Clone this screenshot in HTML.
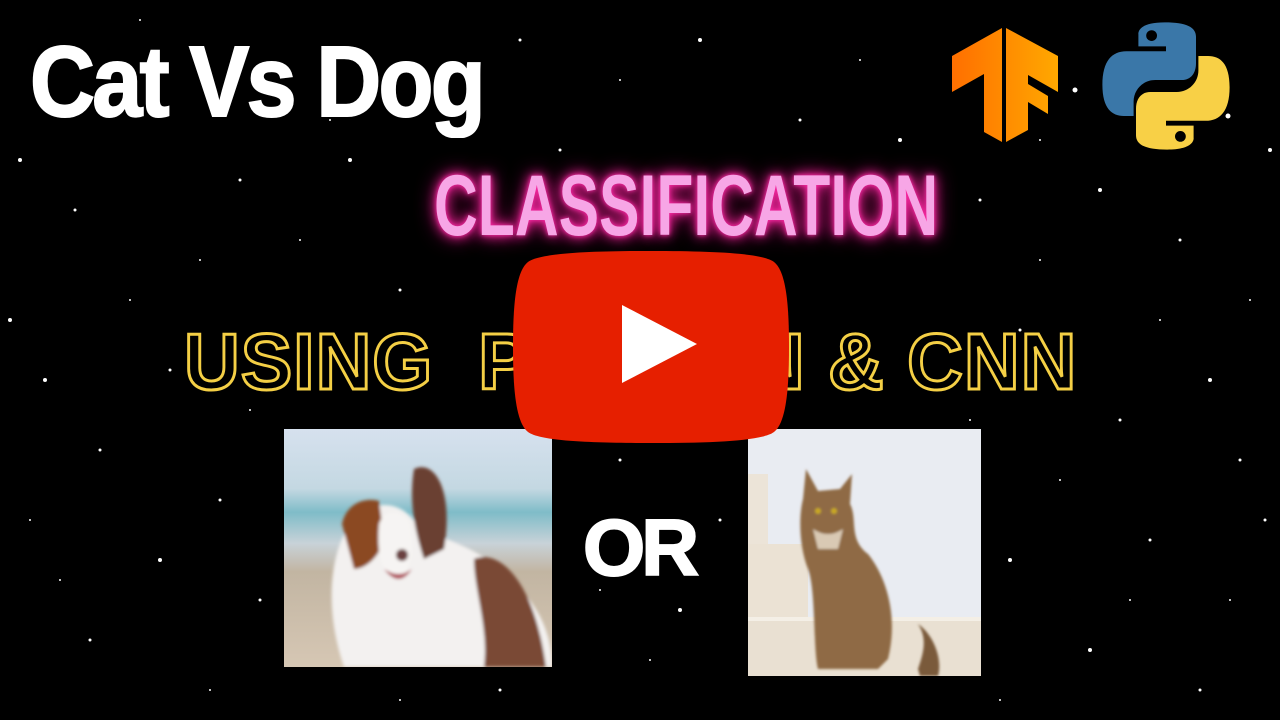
<!DOCTYPE html>
<html><head><meta charset="utf-8"><style>
html,body{margin:0;padding:0}
body{width:1280px;height:720px;background:#000;position:relative;overflow:hidden;font-family:"Liberation Sans",sans-serif}
.abs{position:absolute}
#title{left:30px;top:22px;font-size:100px;font-weight:bold;color:#fff;letter-spacing:-3px;white-space:nowrap;line-height:120px;transform:scaleX(0.9);transform-origin:0 0;-webkit-text-stroke:2px #fff}
#cls{left:434px;top:160px;font-size:86px;font-weight:bold;color:#f7a6e6;white-space:nowrap;transform:scaleX(0.705);transform-origin:0 0;line-height:92px;text-shadow:0 0 6px #ff2aa6,0 0 14px #ff2aa6,0 0 24px #d0107a}
#using{left:184px;top:322px;font-size:80px;font-weight:bold;color:transparent;-webkit-text-stroke:3px #f4cf45;white-space:nowrap;transform:scaleX(0.965);transform-origin:0 0;line-height:80px;letter-spacing:1px}
#or{left:583px;top:498px;font-size:80px;font-weight:bold;color:#fff;letter-spacing:-4px;line-height:100px;-webkit-text-stroke:2px #fff}
</style></head><body>
<svg class="abs" style="left:0;top:0" width="1280" height="720">
<g fill="#fff">
<circle cx="20" cy="160" r="2"/><circle cx="75" cy="210" r="1.5"/><circle cx="130" cy="300" r="1"/><circle cx="45" cy="380" r="2"/><circle cx="100" cy="450" r="1.5"/><circle cx="30" cy="520" r="1"/><circle cx="160" cy="560" r="2"/><circle cx="90" cy="640" r="1.5"/><circle cx="210" cy="690" r="1"/><circle cx="240" cy="180" r="1.5"/><circle cx="300" cy="240" r="1"/><circle cx="350" cy="160" r="2"/><circle cx="400" cy="290" r="1.5"/><circle cx="250" cy="410" r="1"/><circle cx="170" cy="370" r="1.5"/><circle cx="560" cy="150" r="1.5"/><circle cx="620" cy="80" r="1"/><circle cx="700" cy="40" r="2"/><circle cx="800" cy="120" r="1.5"/><circle cx="860" cy="60" r="1"/><circle cx="900" cy="140" r="2"/><circle cx="980" cy="200" r="1.5"/><circle cx="1040" cy="260" r="1"/><circle cx="1100" cy="190" r="2"/><circle cx="1180" cy="240" r="1.5"/><circle cx="1250" cy="300" r="1"/><circle cx="1210" cy="380" r="2"/><circle cx="1120" cy="420" r="1.5"/><circle cx="1060" cy="480" r="1"/><circle cx="1010" cy="560" r="2"/><circle cx="1150" cy="540" r="1.5"/><circle cx="1230" cy="600" r="1"/><circle cx="1090" cy="650" r="2"/><circle cx="1200" cy="690" r="1.5"/><circle cx="1000" cy="700" r="1"/><circle cx="620" cy="460" r="1.5"/><circle cx="680" cy="610" r="2"/><circle cx="650" cy="660" r="1"/><circle cx="720" cy="520" r="1.5"/><circle cx="600" cy="590" r="1"/><circle cx="500" cy="690" r="1.5"/><circle cx="400" cy="700" r="1"/><circle cx="330" cy="120" r="1"/><circle cx="520" cy="40" r="1.5"/><circle cx="1020" cy="330" r="1.5"/><circle cx="1270" cy="150" r="2"/><circle cx="1240" cy="460" r="1.5"/><circle cx="10" cy="320" r="2"/><circle cx="60" cy="580" r="1"/><circle cx="220" cy="500" r="1.5"/><circle cx="470" cy="120" r="1"/><circle cx="760" cy="300" r="1"/><circle cx="1075" cy="90" r="2.5"/><circle cx="1228" cy="116" r="2.5"/>
<circle cx="140" cy="20" r="1"/><circle cx="260" cy="600" r="1.5"/><circle cx="1160" cy="320" r="1"/><circle cx="1265" cy="520" r="1.5"/><circle cx="970" cy="420" r="1"/><circle cx="200" cy="260" r="1"/><circle cx="1130" cy="600" r="1"/><circle cx="1040" cy="140" r="1"/>
</g></svg>

<div class="abs" id="title">Cat Vs Dog</div>

<svg class="abs" style="left:950px;top:22px" width="112" height="124" viewBox="0 0 112 124">
<defs><linearGradient id="tf" x1="0" x2="1"><stop offset="0" stop-color="#ff6f00"/><stop offset="1" stop-color="#ffa800"/></linearGradient></defs>
<path fill="url(#tf)" d="M2 34 L52 6 V120 L34 110 V52 L2 70 Z M56 6 L108 34 V70 L78 53 V62 L98 74 V92 L78 80 V108 L56 120 Z"/>
</svg>

<svg class="abs" style="left:1100px;top:20px" width="132" height="132" viewBox="0 0 110 110">
<path fill="#3a77a8" d="M54 2 C30 2 32 12 32 12 V22 H55 V26 H22 C10 26 2 34 2 54 C2 74 10 80 20 80 H28 V68 C28 58 36 50 46 50 H68 C76 50 80 44 80 36 V14 C80 6 72 2 54 2 Z"/>
<path fill="#f8d046" d="M56 108 C80 108 78 98 78 98 V88 H55 V84 H88 C100 84 108 76 108 56 C108 36 100 30 90 30 H82 V42 C82 52 74 60 64 60 H42 C34 60 30 66 30 74 V96 C30 104 38 108 56 108 Z"/>
<circle cx="43" cy="13" r="4.5" fill="#000"/><circle cx="67" cy="97" r="4.5" fill="#000"/>
</svg>

<div class="abs" id="cls">CLASSIFICATION</div>
<div class="abs" id="using">USING&nbsp; PYTHON &amp; CNN</div>

<svg class="abs" style="left:284px;top:429px" width="268" height="238" viewBox="0 0 268 238">
<defs><filter id="b2"><feGaussianBlur stdDeviation="1.5"/></filter>
<linearGradient id="sky" x1="0" y1="0" x2="0" y2="1"><stop offset="0" stop-color="#d6e1ee"/><stop offset=".25" stop-color="#c4d8e2"/><stop offset=".35" stop-color="#7fbcc8"/><stop offset=".48" stop-color="#c8d2d8"/><stop offset=".6" stop-color="#c2b5a2"/><stop offset="1" stop-color="#d6c7b4"/></linearGradient></defs>
<rect width="268" height="238" fill="url(#sky)"/>
<g filter="url(#b2)">
<path fill="#f3f1f0" d="M60 238 C40 180 45 120 70 90 C90 70 120 70 135 100 C160 110 200 120 225 150 C250 170 268 200 268 238 Z"/>
<path fill="#7a4a35" d="M190 130 C215 120 250 150 262 238 H200 C205 200 190 160 190 130 Z"/>
<path fill="#8b4a22" d="M58 95 C62 75 80 68 95 72 L100 110 C95 130 80 140 70 140 Z"/>
<path fill="#6a3f30" d="M130 40 C150 30 170 60 160 120 L140 130 C130 100 125 70 130 40 Z"/>
<path fill="#f6f4f3" d="M95 95 C100 80 115 80 125 92 C130 110 130 140 115 150 C100 150 92 130 95 95 Z"/>
<path fill="#b0505a" d="M100 140 Q115 160 128 140 Q115 150 100 140 Z"/>
<circle cx="118" cy="126" r="6" fill="#6b4040"/>
</g></svg>

<div class="abs" id="or">OR</div>

<svg class="abs" style="left:748px;top:429px" width="233" height="247" viewBox="0 0 233 247">
<defs><filter id="b3"><feGaussianBlur stdDeviation="1.2"/></filter></defs>
<rect width="233" height="247" fill="#e9ecf2"/>
<rect x="0" y="45" width="20" height="200" fill="#ece4d8"/>
<rect x="0" y="115" width="60" height="130" fill="#ebe2d4"/>
<rect x="0" y="190" width="233" height="57" fill="#e9e0d2"/>
<rect x="0" y="188" width="233" height="4" fill="#f4efe6"/>
<g filter="url(#b3)">
<path fill="#8f6a45" d="M55 70 L58 40 L70 62 L92 60 L104 45 L102 75 C110 90 100 110 120 125 C140 150 150 190 140 230 L130 240 L70 240 C65 220 68 160 60 140 C52 120 50 90 55 70 Z"/>
<path fill="#7a5a3a" d="M170 240 C175 225 180 210 170 195 C185 205 195 230 190 247 H172 Z"/>
<circle cx="70" cy="82" r="3" fill="#c9a820"/><circle cx="86" cy="82" r="3" fill="#c9a820"/>
<path fill="#d9c9b4" d="M65 100 Q80 110 95 100 L90 120 L70 120 Z"/>
</g></svg>

<svg class="abs" style="left:512px;top:250px" width="278" height="194" viewBox="0 0 278 194">
<path fill="#e61f00" d="M139 1 C200 1 250 3 262 12 C275 22 277 60 277 97 C277 134 275 172 262 182 C250 191 200 193 139 193 C78 193 28 191 16 182 C3 172 1 134 1 97 C1 60 3 22 16 12 C28 3 78 1 139 1 Z"/>
<path fill="#fff" d="M110 55 L185 94 L110 133 Z"/>
</svg>
</body></html>
